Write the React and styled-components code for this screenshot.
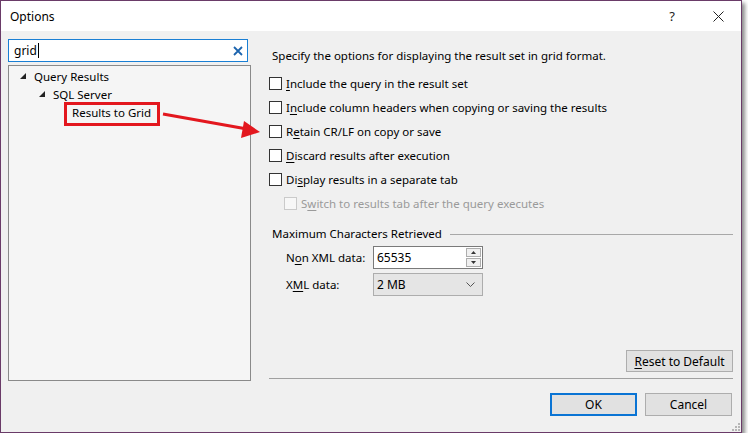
import React from 'react';
import styled, { createGlobalStyle } from 'styled-components';

const Global = createGlobalStyle`
  html, body { margin: 0; padding: 0; background: #ffffff; }
  body { font-family: "Segoe UI", "Noto Sans", "Open Sans", sans-serif; font-size: 11.5px; color: #000; }
  * { box-sizing: border-box; }
`;

const Win = styled.div`
  position: relative;
  width: 742px;
  height: 433px;
  border: 1px solid #6a3b68;
  background: #f0f0f0;
  box-shadow: 3px 3px 4px rgba(0, 0, 0, 0.45);
  display: flex;
  flex-direction: column;
`;

const TitleBar = styled.div`
  height: 30px;
  background: #ffffff;
  display: flex;
  align-items: center;
  padding-left: 9px;
  font-size: 12px;
`;

const Title = styled.div`
  flex: 1;
`;

const TitleBtn = styled.div`
  width: ${p => p.w}px;
  display: flex;
  justify-content: center;
  align-items: center;
  height: 100%;
  font-size: 13px;
  color: #222;
`;

const Body = styled.div`
  height: 350px;
  display: flex;
  padding-left: 7px;
`;

const LeftPane = styled.div`
  width: 243px;
  display: flex;
  flex-direction: column;
  padding-top: 8px;
`;

const Search = styled.div`
  height: 23px;
  width: 240px;
  border: 1px solid #1a7fd4;
  background: #fff;
  display: flex;
  align-items: center;
  padding: 0 4px 0 5px;
  font-size: 12px;
`;

const SearchText = styled.div`
  flex: 1;
  display: flex;
  align-items: center;
`;

const Caret = styled.span`
  display: inline-block;
  width: 1px;
  height: 15px;
  background: #000;
  margin-left: 1px;
`;

const Tree = styled.div`
  margin-top: 3px;
  flex: 1;
  width: 243px;
  border: 1px solid #8a8a8a;
  background: #f5f5f5;
  padding-top: 1px;
`;

const TreeRow = styled.div`
  height: 18px;
  display: flex;
  align-items: center;
  padding-left: ${p => 11 + p.level * 19}px;
`;

const Expander = styled.span`
  width: 14px;
  display: flex;
  align-items: center;
`;

const Label = styled.span`
  position: relative;
  ${p => p.marked && `
    &::after {
      content: '';
      position: absolute;
      left: -8px;
      right: -9px;
      top: -3px;
      bottom: -6px;
      border: 3px solid #e3171e;
    }
  `}
`;

const Arrow = styled.svg`
  position: absolute;
  left: 0;
  top: 0;
  pointer-events: none;
`;

const RightPane = styled.div`
  flex: 1;
  margin-left: 18px;
  padding-right: 8px;
  display: flex;
  flex-direction: column;
  padding-top: 12px;
`;

const Desc = styled.div`
  height: 24px;
  display: flex;
  align-items: center;
  padding-left: 3px;
  margin-bottom: 4px;
`;

const CheckRow = styled.div`
  height: 24px;
  display: flex;
  align-items: center;
  padding-left: ${p => (p.indent ? 15 : 0)}px;
  color: ${p => (p.disabled ? '#9a9a9a' : '#000')};
`;

const Box = styled.span`
  width: 13px;
  height: 13px;
  border: 1px solid ${p => (p.disabled ? '#cacaca' : '#333')};
  background: ${p => (p.disabled ? '#f7f7f7' : '#fff')};
  margin-right: 4px;
  flex: none;
`;

const U = styled.span`
  text-decoration: underline;
  text-underline-offset: 2px;
`;

const GroupHead = styled.div`
  margin-top: 9px;
  height: 18px;
  display: flex;
  align-items: center;
  padding-left: 3px;
  &::after {
    content: '';
    flex: 1;
    height: 1px;
    background: #a8a8a8;
    margin-left: 8px;
    margin-top: 2px;
  }
`;

const FieldRow = styled.div`
  display: flex;
  align-items: center;
  height: 23px;
  margin-top: ${p => p.mt}px;
  padding-left: 17px;
`;

const FieldLabel = styled.div`
  width: 87px;
`;

const NumInput = styled.div`
  width: 110px;
  height: 23px;
  background: #fff;
  border: 1px solid #7a7a7a;
  display: flex;
  align-items: center;
  padding-left: 3px;
  padding-right: 1px;
  font-size: 12px;
`;

const Spin = styled.div`
  margin-left: auto;
  width: 15px;
  height: 19px;
  display: flex;
  flex-direction: column;
  gap: 1px;
`;

const SpinBtn = styled.div`
  flex: 1;
  border: 1px solid #adadad;
  background: #f0f0f0;
  display: flex;
  align-items: center;
  justify-content: center;
`;

const Select = styled.div`
  width: 110px;
  height: 23px;
  background: #e5e5e5;
  border: 1px solid #adadad;
  display: flex;
  align-items: center;
  justify-content: space-between;
  padding: 0 7px 0 3px;
  font-size: 12px;
`;

const Spacer = styled.div`
  flex: 1;
`;

const Btn = styled.div`
  width: ${p => p.w}px;
  height: ${p => p.h || 23}px;
  background: #e1e1e1;
  border: ${p => (p.primary ? '2px solid #0a74d4' : '1px solid #adadad')};
  display: flex;
  align-items: center;
  justify-content: center;
  font-size: 12px;
`;

const ResetRow = styled.div`
  display: flex;
  justify-content: flex-end;
`;

const Sep = styled.div`
  margin-top: 6px;
  height: 1px;
  background: #a0a0a0;
  margin-bottom: 2px;
`;

const Footer = styled.div`
  flex: 1;
  display: flex;
  justify-content: flex-end;
  gap: 8px;
  padding: 12px 9px 0 0;
  position: relative;
`;

const Grip = styled.svg`
  position: absolute;
  right: 1px;
  bottom: 1px;
`;

function Tri() {
  return (
    <svg width="6" height="6" viewBox="0 0 6 6">
      <polygon points="6,0 6,6 0,6" fill="#222" />
    </svg>
  );
}

function Check({ children, indent, disabled }) {
  return (
    <CheckRow indent={indent} disabled={disabled}>
      <Box disabled={disabled} />
      <span>{children}</span>
    </CheckRow>
  );
}

export default function App() {
  return (
    <>
      <Global />
      <Win>
        <TitleBar>
          <Title>Options</Title>
          <TitleBtn w={46}>?</TitleBtn>
          <TitleBtn w={46}>
            <svg width="11" height="11" viewBox="0 0 11 11">
              <path d="M0.5 0.5 L10.5 10.5 M10.5 0.5 L0.5 10.5" stroke="#222" strokeWidth="1" />
            </svg>
          </TitleBtn>
        </TitleBar>
        <Body>
          <LeftPane>
            <Search>
              <SearchText>grid<Caret /></SearchText>
              <svg width="10" height="10" viewBox="0 0 10 10">
                <path d="M1 1 L9 9 M9 1 L1 9" stroke="#1c64ae" strokeWidth="1.8" />
              </svg>
            </Search>
            <Tree>
              <TreeRow level={0}>
                <Expander><Tri /></Expander>
                <Label>Query Results</Label>
              </TreeRow>
              <TreeRow level={1}>
                <Expander><Tri /></Expander>
                <Label>SQL Server</Label>
              </TreeRow>
              <TreeRow level={2}>
                <Expander />
                <Label marked>Results to Grid</Label>
              </TreeRow>
            </Tree>
          </LeftPane>
          <RightPane>
            <Desc>Specify the options for displaying the result set in grid format.</Desc>
            <Check><U>I</U>nclude the query in the result set</Check>
            <Check>I<U>n</U>clude column headers when copying or saving the results</Check>
            <Check>R<U>e</U>tain CR/LF on copy or save</Check>
            <Check><U>D</U>iscard results after execution</Check>
            <Check>Di<U>s</U>play results in a separate tab</Check>
            <Check indent disabled>S<U>w</U>itch to results tab after the query executes</Check>
            <GroupHead>Maximum Characters Retrieved</GroupHead>
            <FieldRow mt={4}>
              <FieldLabel>N<U>o</U>n XML data:</FieldLabel>
              <NumInput>
                65535
                <Spin>
                  <SpinBtn>
                    <svg width="5" height="3" viewBox="0 0 5 3"><polygon points="2.5,0 5,3 0,3" fill="#333" /></svg>
                  </SpinBtn>
                  <SpinBtn>
                    <svg width="5" height="3" viewBox="0 0 5 3"><polygon points="0,0 5,0 2.5,3" fill="#333" /></svg>
                  </SpinBtn>
                </Spin>
              </NumInput>
            </FieldRow>
            <FieldRow mt={4}>
              <FieldLabel>X<U>M</U>L data:</FieldLabel>
              <Select>
                2 MB
                <svg width="9" height="5" viewBox="0 0 9 5">
                  <path d="M0.5 0.5 L4.5 4.5 L8.5 0.5" stroke="#555" fill="none" strokeWidth="1" />
                </svg>
              </Select>
            </FieldRow>
            <Spacer />
            <ResetRow>
              <Btn w={107} h={22}><span><U>R</U>eset to Default</span></Btn>
            </ResetRow>
            <Sep />
          </RightPane>
        </Body>
        <Footer>
          <Btn w={87} primary>OK</Btn>
          <Btn w={87}>Cancel</Btn>
          <Grip width="8" height="8" viewBox="0 0 8 8">
            <g fill="#b5b5b5">
              <rect x="6" y="0" width="2" height="2" />
              <rect x="3" y="3" width="2" height="2" />
              <rect x="6" y="3" width="2" height="2" />
              <rect x="0" y="6" width="2" height="2" />
              <rect x="3" y="6" width="2" height="2" />
              <rect x="6" y="6" width="2" height="2" />
            </g>
          </Grip>
        </Footer>
        <Arrow width="742" height="433" viewBox="0 0 742 433">
          <line x1="162" y1="113" x2="246" y2="128" stroke="#e3171e" strokeWidth="3" />
          <polygon points="259,131 243,120 240,137" fill="#e3171e" />
        </Arrow>
      </Win>
    </>
  );
}
